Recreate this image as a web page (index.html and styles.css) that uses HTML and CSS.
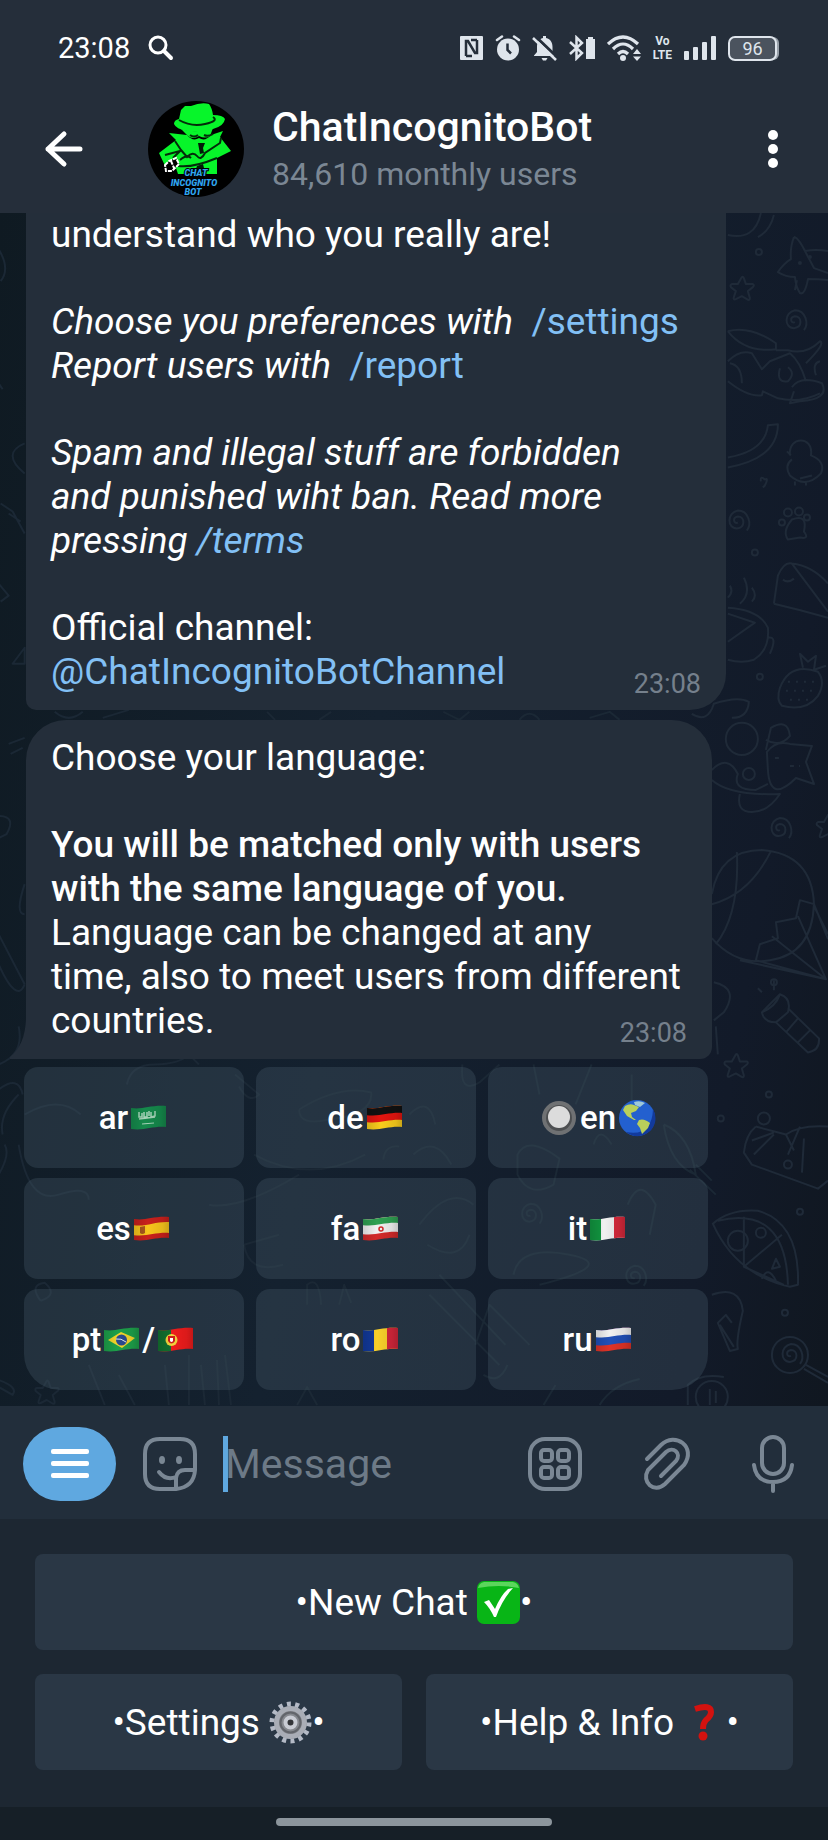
FILE: index.html
```html
<!DOCTYPE html>
<html lang="en">

<head>
    <meta charset="UTF-8">
    <meta name="viewport" content="width=device-width, initial-scale=1.0">
    <title>ChatIncognitoBot</title>
    <link rel="stylesheet" href="styles.css">
</head>

<body>
    <!-- status bar -->
    <div class="status">
        <span class="clock">23:08</span>
        <svg width="26" height="26" viewBox="0 0 26 26" fill="none" stroke="#fff" stroke-linecap="round">
            <circle cx="10" cy="10" r="8" stroke-width="3" />
            <path d="M16 16L23 23" stroke-width="4" />
        </svg>
        <div class="status-icons">
            <svg width="25" height="26" viewBox="0 0 25 26">
                <rect x="1" y="1" width="23" height="24" rx="1" fill="#dfe5ec" />
                <path fill="none" stroke="#252e3a" stroke-width="2.5" d="M7 21V6H9L16 18H18V5M12 5H18M7 21H13" />
            </svg>
            <svg width="26" height="26" viewBox="0 0 26 26">
                <circle cx="13" cy="14.5" r="11" fill="#dfe5ec" />
                <path fill="none" stroke="#dfe5ec" stroke-width="2.5" stroke-linecap="round" d="M2 5L7 1.5M24 5L19 1.5" />
                <path fill="none" stroke="#252e3a" stroke-width="2.5" d="M12.5 8.5V15L16 18.5" />
            </svg>
            <svg width="25" height="26" viewBox="0 0 25 26">
                <path fill="#dfe5ec" d="M11 3V1H14V3C19 4 20.5 8 20.5 12V17L23 20.5V21H2V20.5L5 17V12C5 8 6.5 4 11 3ZM9.5 23H15.5L14 25.5H11Z" />
                <path stroke="#252e3a" stroke-width="3" d="M3 1L25 22" />
                <path stroke="#dfe5ec" stroke-width="2.5" d="M1 3L24 25" />
            </svg>
            <svg width="28" height="26" viewBox="0 0 28 26">
                <path fill="none" stroke="#dfe5ec" stroke-width="2.5" d="M2 7L14 18L8.5 23.5V2.5L14 8L2 19" />
                <path fill="#dfe5ec" d="M18 4H20V2H25V4H27V24H18Z" />
            </svg>
            <svg width="35" height="26" viewBox="0 0 35 26">
                <g fill="none" stroke="#dfe5ec" stroke-width="3.2">
                    <path d="M1 9Q16 -5 31 9" />
                    <path d="M6 14Q16 4 26 14" />
                    <path d="M11 19Q16 14 21 19" />
                </g>
                <circle cx="16" cy="23" r="3" fill="#dfe5ec" />
                <path fill="#dfe5ec" d="M26 19L30 14L34 19ZM26 21.5H34L30 26Z" />
            </svg>
            <div class="volte"><span>Vo</span><span>LTE</span></div>
            <svg width="34" height="26" viewBox="0 0 34 26" fill="#dfe5ec">
                <rect x="1" y="16" width="5" height="9" rx="1" />
                <rect x="10" y="12" width="5" height="13" rx="1" />
                <rect x="19" y="7" width="5" height="18" rx="1" />
                <rect x="28" y="1" width="5" height="24" rx="1" />
            </svg>
            <div class="battery">96</div>
        </div>
    </div>

    <!-- chat header -->
    <header class="header">
        <button class="icon-btn back" aria-label="Back">
            <svg width="40" height="38" viewBox="0 0 40 38" fill="none" stroke="#fff" stroke-width="5" stroke-linecap="round" stroke-linejoin="round">
                <path d="M20 4L4 19L20 34M4 19H36" />
            </svg>
        </button>
        <svg class="avatar" width="98" height="98" viewBox="0 0 98 98">
            <circle cx="49" cy="49" r="48" fill="#000" />
            <g fill="#07f52a">
                <path d="M32 19L34 10L38 6L44 6Q54 2 62 4Q65 8 66 15Q76 15 78 19Q77 26 66 29Q54 33 40 31Q29 29 27 24Q27 20 32 19Z" />
                <path d="M34 29Q50 34 66 28L63 36Q58 39 52 36Q46 40 41 36Z" />
                <path d="M22 33L40 35Q46 42 52 38Q58 42 64 35L76 31L73 37L84 51L70 58V74H31L29 68L20 70L12 53L29 40Z" />
            </g>
            <g fill="none" stroke="#032b0a" stroke-width="2">
                <path d="M32 20Q44 27 58 24T66 17M43 35Q47 38 51 35M57 35Q61 37 66 34" />
                <path d="M28 41L34 50L26 58M18 55L33 51M34 50L40 57Q46 51 50 56T58 53L73 43L74 38M31 66Q46 68 70 58M33 60Q40 54 44 58" />
            </g>
            <path fill="#021a08" d="M51 43H58L56 48L57 53L53 54ZM50 66L56 64L58 72H48Z" />
            <path fill="#000" stroke="#fff" stroke-width="2" stroke-dasharray="4 1" d="M18 65L22 61L29 58L32 64L25 71L19 71ZM24 61L27 68" />
            <g class="avatar-text">
                <text x="49" y="76">CHAT</text>
                <text x="47" y="86">INCOGNITO</text>
                <text x="46" y="95">BOT</text>
            </g>
        </svg>
        <div class="title">
            <h1>ChatIncognitoBot</h1>
            <p>84,610 monthly users</p>
        </div>
        <button class="icon-btn" aria-label="More">
            <svg width="12" height="40" viewBox="0 0 12 40" fill="#fff">
                <circle cx="6" cy="6" r="5" />
                <circle cx="6" cy="20" r="5" />
                <circle cx="6" cy="34" r="5" />
            </svg>
        </button>
    </header>

    <main class="chat">
        <!-- wallpaper doodles -->
        <svg class="wallpaper" viewBox="0 0 828 1191" preserveAspectRatio="xMaxYMax slice" aria-hidden="true">
            <defs>
                <path id="star" d="M0 -12Q1 -13 2 -11L4 -5L11 -5Q13 -4 11 -2L6 2L8 9Q8 12 5 10L0 7L-6 10Q-9 11 -8 8L-6 2L-11 -2Q-12 -4 -10 -5L-4 -5Z" />
                <path id="swirl" d="M1 1C-3 3 -5 -4 1 -5C8 -5 9 6 0 7C-10 7 -10 -9 1 -11C12 -11 15 3 10 9" />
                <circle id="dot" r="3" />
            </defs>
            <!-- right side -->
            <path d="M728 22Q755 28 761 0M774 2Q770 18 758 24" />
            <path d="M794 24Q798 24 805 38Q816 36 828 38M794 24Q790 34 791 46Q784 50 778 59Q786 64 795 64Q796 74 800 80Q805 82 808 66Q818 66 828 67M805 38L814 55L828 60M797 67L795 77" />
            <circle cx="800" cy="50" r="1" />
            <circle cx="810" cy="44" r="1" />
            <use href="#star" x="742" y="76" />
            <use href="#dot" x="759" y="39" />
            <use href="#swirl" x="794" y="108" />
            <path d="M728 118Q750 112 776 130V136Q745 140 728 118M728 148Q740 136 752 140L762 156L770 148L790 140Q800 148 806 168M728 168Q748 184 762 182L763 178L778 185Q800 190 820 180M776 137H788Q806 142 820 128Q826 130 806 150M780 155Q776 170 788 168Q796 160 788 154M792 174Q800 162 822 170Q830 186 800 188L790 190L794 178M816 162Q812 150 820 148M730 150Q742 152 742 170" />
            <path d="M728 244Q765 238 768 212L778 211Q778 245 728 254" />
            <path d="M790 242C788 222 814 222 811 242Q826 248 821 260Q806 276 790 262Q784 252 792 246M787 238L791 242M800 265L812 262M795 268V272M806 268V272" />
            <path d="M761 268Q760 262 765 266Q769 264 765 272L763 274" />
            <use href="#swirl" x="737" y="308" />
            <use href="#dot" x="755" y="339" />
            <path d="M788 326Q782 318 792 306Q808 300 804 318Q810 326 800 324Z" />
            <circle cx="782" cy="309" r="3" />
            <circle cx="788" cy="299" r="4" />
            <circle cx="799" cy="298" r="4" />
            <circle cx="807" cy="304" r="3" />
            <path d="M774 390L778 362Q784 348 792 350Q812 352 828 370M774 390Q800 396 828 404M792 350L828 398M783 366Q788 370 794 365" />
            <path d="M728 394Q760 396 768 414Q770 436 754 446Q742 450 728 446M728 400L755 409L728 428M768 424Q778 422 770 440M740 390Q752 380 744 364M752 388Q758 382 752 374M728 384Q734 378 730 372" />
            <path d="M780 474Q790 448 818 458Q826 468 818 482Q806 498 782 492Q776 486 780 474M803 454L800 440L808 448L816 442L814 456L826 452" />
            <path stroke-dasharray="2 6" d="M788 468H818M786 477H818M790 486H812" />
            <use href="#dot" x="760" y="463" />
            <path d="M692 500Q708 510 714 490Q738 482 749 488Q748 504 732 504M767 538Q776 526 790 530L812 532L806 548L814 570L796 564Q770 590 768 556ZM766 536L771 514Q788 504 790 522Q780 534 766 526M712 566Q730 582 780 580Q768 598 752 598Q736 598 740 580M712 556Q728 540 738 560Q732 576 756 576L768 570" />
            <circle cx="742" cy="525" r="16" />
            <circle cx="749" cy="560" r="6" />
            <path stroke-dasharray="4 5" d="M775 544H784M790 552H800" />
            <use href="#swirl" x="779" y="615" />
            <use href="#star" x="828" y="613" />
            <path d="M712 680Q720 636 762 636Q812 640 814 690Q812 740 770 746Q736 752 712 724M737 638Q740 700 716 730M771 637Q750 680 712 690M814 690L828 725M814 690L800 686L796 704L776 708L778 724L760 730L756 746L826 765L772 722M798 702L826 765M814 692L828 720M740 746L826 765" />
            <path d="M714 768Q740 774 724 798L714 806M716 812L718 840" />
            <path d="M762 798L780 780Q792 784 788 798L776 808Q764 808 762 798ZM776 808L808 838Q820 836 819 824L788 794M786 818L798 804M798 828L810 816M762 798Q776 792 780 780M774 776V766M762 778L758 774" />
            <use href="#star" x="736" y="852" />
            <use href="#dot" x="774" y="768" />
            <path d="M756 912L786 920Q800 910 828 912M756 912Q746 920 744 938L752 950L818 974L828 966M786 920L794 936M800 912L788 940M752 926L774 918M754 940L774 920M804 924L802 958" />
            <circle cx="764" cy="904" r="6" />
            <circle cx="788" cy="950" r="4" />
            <use href="#dot" x="721" y="904" />
            <use href="#dot" x="769" y="880" />
            <use href="#dot" x="800" y="997" />
            <path d="M713 1009Q730 994 758 996Q800 1008 798 1070L790 1072Q736 1060 713 1009ZM718 1006Q786 990 788 1070M744 1002V1052L782 1020M744 1052L784 1070" />
            <circle cx="738" cy="1026" r="10" />
            <circle cx="761" cy="1018" r="5" />
            <path d="M762 1064Q768 1050 776 1066M772 1054L776 1044L780 1052Z" />
            <path d="M712 1080Q740 1070 743 1096Q736 1126 738 1134L730 1136L718 1108L726 1100L732 1108M720 1110L734 1132" />
            <use href="#dot" x="785" y="1098" />
            <circle cx="790" cy="1140" r="18" />
            <use href="#swirl" x="790" y="1140" />
            <path d="M804 1154L828 1168M806 1150L828 1162" />
            <circle cx="712" cy="1182" r="16" />
            <path d="M710 1174V1190M716 1176V1188M688 1190V1170Q700 1158 724 1162" />
            <!-- behind the language keys -->
            <g class="faint">
                <path d="M26 900Q60 880 82 900M20 930Q30 990 60 980T90 985M20 880Q0 900 4 920M0 875Q20 860 24 880M0 960Q12 940 6 930M128 870Q132 850 156 850T190 840L200 850M236 860L260 880Q250 890 240 872M255 940Q310 970 366 940M300 895Q340 870 372 878Q374 900 330 905Q300 912 300 895M384 945Q386 930 400 932M245 1030L280 1020M245 1030Q250 1060 284 1050M210 990Q240 996 300 960M42 1086Q30 1070 46 1068Q60 1080 42 1086M170 1190L166 1150M190 1140V1190M206 1190L202 1150M220 1190L218 1145M232 1190L226 1140M90 1150L106 1190M120 1160L136 1190M298 1190L308 1172L318 1190M308 1090V1070Q320 1060 322 1090M340 1090L345 1070L352 1088M0 1165Q20 1172 14 1180L0 1172" />
                <path d="M463 850Q460 880 480 868L500 850M534 850L540 880M576 890L592 850M632 860V890M518 940Q528 920 560 944L554 970Q530 984 518 960ZM664 910Q690 920 696 960Q670 950 664 910M690 955L716 980M696 950L712 966M594 930Q600 910 612 930M628 990Q640 960 656 990L650 1020M514 1060Q520 1030 570 1040T540 1070M430 1080L500 1150M440 1060L506 1130M476 1130L490 1090L530 1130M484 1160Q500 1170 508 1150M544 1190L556 1170M600 1190Q612 1170 640 1164M410 900Q430 880 436 910M414 940Q436 920 452 950M420 1010Q450 970 474 990M428 1030Q460 1050 470 1020" />
                <use href="#star" x="48" y="1178" />
                <use href="#swirl" x="530" y="1000" />
                <use href="#swirl" x="634" y="1062" />
            </g>
            <!-- left edge -->
            <g class="faint">
                <path d="M0 36Q12 56 2 68M0 170L4 176M26 230Q2 240 26 260M2 290L14 298L26 320M10 300L22 308M0 370L10 382L2 388M14 450L26 434V450ZM10 530L26 524M12 540L24 534M0 602Q18 602 8 620L0 624M26 670Q16 700 26 700M0 720L26 770M0 750Q18 790 26 770M20 812Q26 840 0 850" />
                <path d="M56 498Q70 510 84 498M104 504L130 496M268 498L276 506M320 506L332 498M444 498L460 506L470 498M520 506Q530 494 540 506M590 504L610 498L620 506" />
            </g>
        </svg>

        <div class="messages">
            <article class="bubble bubble-first">
                <div class="text">
                    <p>understand who you really are!</p>
                    <p><i>Choose you preferences with&nbsp;</i> <a href="#">/settings</a><br>
                        <i>Report users with&nbsp;</i> <a href="#">/report</a></p>
                    <p><i>Spam and illegal stuff are forbidden<br>and punished wiht ban. Read more<br>pressing <a href="#">/terms</a></i></p>
                    <p>Official channel:<br><a href="#">@ChatIncognitoBotChannel</a></p>
                </div>
                <time>23:08</time>
            </article>

            <article class="bubble bubble-last">
                <div class="text">
                    <p>Choose your language:</p>
                    <p><b>You will be matched only with users<br>with the same language of you.</b><br>Language can be changed at any<br>time, also to meet users from different<br>countries.</p>
                </div>
                <time>23:08</time>
            </article>

            <div class="keys">
                <button>ar<svg class="flag" viewBox="0 0 37 25" role="img" aria-label="Saudi Arabia">
                        <defs>
                            <clipPath id="wave">
                                <path d="M1 3C12 5 20 0 36 1V22C22 21 14 26 1 24Z" />
                            </clipPath>
                            <linearGradient id="fold">
                                <stop offset="0" stop-opacity=".15" />
                                <stop offset=".4" stop-opacity="0" />
                                <stop offset=".8" stop-opacity=".08" />
                                <stop offset="1" stop-opacity=".2" />
                            </linearGradient>
                        </defs>
                        <g clip-path="url(#wave)">
                            <path fill="#158a4c" d="M0 0H37V25H0Z" />
                            <path fill="none" stroke="#a5d3b8" stroke-width="1.5" d="M9 7V12L12 12V8M14 7V12H17V7M19 6V11M21 7V12L25 11V6M9 14L25 12" />
                            <path stroke="#a5d3b8" d="M12 19L24 18" />
                            <path fill="url(#fold)" d="M0 0H37V25H0Z" />
                        </g>
                    </svg></button>
                <button>de<svg class="flag" viewBox="0 0 37 25" role="img" aria-label="Germany">
                        <g clip-path="url(#wave)">
                            <path fill="#f8cc1c" d="M0 0H37V25H0Z" />
                            <path fill="#e3150f" d="M0 0H37V15C22 14 14 19 0 17Z" />
                            <path fill="#111" d="M0 0H37V8C22 7 14 12 0 10Z" />
                            <path fill="url(#fold)" d="M0 0H37V25H0Z" />
                        </g>
                    </svg></button>
                <button><svg class="round" viewBox="0 0 38 38" role="img" aria-label="Selected">
                        <circle cx="19" cy="19" r="17" fill="#6f7173" />
                        <circle cx="19" cy="19" r="13" fill="#4d4f51" />
                        <circle cx="19" cy="18" r="11" fill="#dcdcdc" />
                    </svg>en<svg class="round" viewBox="0 0 38 38" role="img" aria-label="Globe">
                        <circle cx="19" cy="19" r="18" fill="#2360cf" />
                        <path fill="#123a9c" d="M35 10A18 18 0 0 1 8 33Q34 38 35 10Z" />
                        <path fill="#b9cf5b" d="M7 7Q12 4 16 6L21 8L18 12L13 14L14 18L18 21L16 21L9 17L5 11ZM21 21Q26 19 32 24L30 29L24 35L22 29L19 25Z" />
                        <path fill="#9fc8d8" d="M16 3Q22 1 27 4L22 8L17 6Z" />
                    </svg></button>
                <button>es<svg class="flag" viewBox="0 0 37 25" role="img" aria-label="Spain">
                        <g clip-path="url(#wave)">
                            <path fill="#c8201c" d="M0 0H37V25H0Z" />
                            <path fill="#f8c51c" d="M0 9C14 11 22 5 37 6V17C22 16 14 21 0 19Z" />
                            <path fill="#a8561c" d="M7 11L12 10V17Q9 19 7 17Z" />
                            <path fill="url(#fold)" d="M0 0H37V25H0Z" />
                        </g>
                    </svg></button>
                <button>fa<svg class="flag" viewBox="0 0 37 25" role="img" aria-label="Iran">
                        <g clip-path="url(#wave)">
                            <path fill="#d32a2a" d="M0 0H37V25H0Z" />
                            <path fill="#f1f1f1" d="M0 0H37V16C22 15 14 20 0 18Z" />
                            <path fill="#2fa052" d="M0 0H37V7C22 6 14 11 0 9Z" />
                            <circle cx="19" cy="13" r="2" fill="none" stroke="#d32a2a" stroke-width="1.5" />
                            <path fill="url(#fold)" d="M0 0H37V25H0Z" />
                        </g>
                    </svg></button>
                <button>it<svg class="flag" viewBox="0 0 37 25" role="img" aria-label="Italy">
                        <g clip-path="url(#wave)">
                            <path fill="#f1f1f1" d="M0 0H37V25H0Z" />
                            <path fill="#11943f" d="M0 0H12V25H0Z" />
                            <path fill="#d8293b" d="M25 0H37V25H25Z" />
                            <path fill="url(#fold)" d="M0 0H37V25H0Z" />
                        </g>
                    </svg></button>
                <button>pt<svg class="flag" viewBox="0 0 37 25" role="img" aria-label="Brazil">
                        <g clip-path="url(#wave)">
                            <path fill="#1da04a" d="M0 0H37V25H0Z" />
                            <path fill="#f4d52a" d="M5 13L18 5L32 11L19 21Z" />
                            <circle cx="18.5" cy="13" r="5.5" fill="#2b4a8f" />
                            <path fill="none" stroke="#dfe6f0" d="M13 12Q18 11 23 15" />
                            <path fill="url(#fold)" d="M0 0H37V25H0Z" />
                        </g>
                    </svg>/<svg class="flag" viewBox="0 0 37 25" role="img" aria-label="Portugal">
                        <g clip-path="url(#wave)">
                            <path fill="#ee1c1c" d="M0 0H37V25H0Z" />
                            <path fill="#12702f" d="M0 0H14V25H0Z" />
                            <circle cx="14.5" cy="13" r="6" fill="#f2d33c" />
                            <path fill="#d01c1c" d="M11 9H18V14Q14.5 19 11 14Z" />
                            <path fill="#fff" d="M13 11H16V14Q14.5 16 13 14Z" />
                            <path fill="url(#fold)" d="M0 0H37V25H0Z" />
                        </g>
                    </svg></button>
                <button>ro<svg class="flag" viewBox="0 0 37 25" role="img" aria-label="Romania">
                        <g clip-path="url(#wave)">
                            <path fill="#f8d02a" d="M0 0H37V25H0Z" />
                            <path fill="#11399a" d="M0 0H12V25H0Z" />
                            <path fill="#d3263a" d="M25 0H37V25H25Z" />
                            <path fill="url(#fold)" d="M0 0H37V25H0Z" />
                        </g>
                    </svg></button>
                <button>ru<svg class="flag" viewBox="0 0 37 25" role="img" aria-label="Russia">
                        <g clip-path="url(#wave)">
                            <path fill="#df3327" d="M0 0H37V25H0Z" />
                            <path fill="#2150b8" d="M0 0H37V16C22 15 14 20 0 18Z" />
                            <path fill="#f1f1f1" d="M0 0H37V8C22 7 14 12 0 10Z" />
                            <path fill="url(#fold)" d="M0 0H37V25H0Z" />
                        </g>
                    </svg></button>
            </div>
        </div>
    </main>

    <!-- message field -->
    <form class="compose">
        <button type="button" class="menu" aria-label="Menu"><span></span><span></span><span></span></button>
        <button type="button" class="icon-btn sticker" aria-label="Stickers">
            <svg width="56" height="56" viewBox="0 0 56 56" fill="none" stroke="#7a8794" stroke-width="4" stroke-linecap="round" stroke-linejoin="round">
                <path d="M34 53H18Q3 53 3 38V18Q3 3 18 3H38Q53 3 53 18V34Q52 51 34 53Z" />
                <path d="M34 52V42Q35 34 43 34H52M17 36Q24 45 34 41" />
                <ellipse cx="20" cy="24" rx="2" ry="3" fill="#7a8794" stroke-width="2" />
                <ellipse cx="37" cy="24" rx="2" ry="3" fill="#7a8794" stroke-width="2" />
            </svg>
        </button>
        <span class="caret"></span>
        <input type="text" class="field" placeholder="Message" aria-label="Message">
        <button type="button" class="icon-btn" aria-label="Bot keyboard">
            <svg width="56" height="56" viewBox="0 0 56 56" fill="none" stroke="#7a8794" stroke-width="4">
                <rect x="3" y="3" width="50" height="50" rx="15" />
                <rect x="14" y="14" width="11" height="11" rx="3" />
                <rect x="31" y="14" width="11" height="11" rx="3" />
                <rect x="14" y="31" width="11" height="11" rx="3" />
                <rect x="31" y="31" width="11" height="11" rx="3" />
            </svg>
        </button>
        <button type="button" class="icon-btn" aria-label="Attach">
            <svg width="48" height="56" viewBox="0 0 48 56" fill="none" stroke="#7a8794" stroke-width="4" stroke-linecap="round">
                <path d="M4 23L18 9C32 -5 54 11 41 29L22 48C11 58 -2 46 5 34L23 16C30 10 39 17 33 25L18 40" />
            </svg>
        </button>
        <button type="button" class="icon-btn" aria-label="Voice message">
            <svg width="44" height="60" viewBox="0 0 44 60" fill="none" stroke="#7a8794" stroke-width="4" stroke-linecap="round">
                <rect x="11" y="3" width="22" height="37" rx="11" />
                <path d="M3 31Q5 48 22 48Q39 48 41 31M22 48V57" />
            </svg>
        </button>
    </form>

    <!-- bot keyboard -->
    <section class="keyboard">
        <button class="wide">•New Chat <svg class="emoji" viewBox="0 0 43 43" role="img" aria-label="Check mark">
                <rect width="43" height="43" rx="7" fill="#08b516" />
                <path fill="#5bd65c" d="M7 1H36Q41 2 42 7Q22 3 1 7Q2 2 7 1Z" />
                <path fill="#fff" d="M7 21L12 19L18 28Q24 14 31 8L36 7Q25 19 19 36H17Q13 27 7 21Z" />
            </svg>•</button>
        <button>•Settings <svg class="emoji" viewBox="0 0 43 43" role="img" aria-label="Gear">
                <circle cx="21.5" cy="21.5" r="18.5" fill="none" stroke="#b4bac6" stroke-width="5" stroke-dasharray="4 4.300" />
                <circle cx="21.5" cy="21.5" r="14" fill="#85888e" stroke="#a9adb6" stroke-width="5" />
                <circle cx="21.5" cy="21.5" r="10" fill="none" stroke="#62656b" stroke-width="2" />
                <circle cx="21.5" cy="21.5" r="5" fill="#333539" stroke="#c9ccd4" stroke-width="4" />
            </svg>•</button>
        <button>•Help &amp; Info <svg class="emoji" viewBox="0 0 43 43" role="img" aria-label="Question mark">
                <path fill="none" stroke="#d3120f" stroke-width="6" d="M12 8Q28 3 28 11Q28 15 23 19Q20 22 20 28" />
                <circle cx="20" cy="35" r="4.500" fill="#d3120f" />
            </svg>•</button>
    </section>

    <div class="nav"><span></span></div>
</body>

</html>
```

FILE: styles.css
```css
* {
    margin: 0;
    padding: 0;
    box-sizing: border-box;
}

body {
    min-height: 100vh;
    display: flex;
    flex-direction: column;
    background: #252e3a;
    color: #fff;
    font-family: Roboto, "Liberation Sans", sans-serif;
}

button {
    border: none;
    background: none;
    color: inherit;
    font-family: inherit;
    cursor: pointer;
}

svg {
    flex-shrink: 0;
}

a {
    color: #82c0f5;
    text-decoration: none;
}

/* status bar */
.status {
    height: 96px;
    padding: 0 48px 0 58px;
    display: flex;
    align-items: center;
    gap: 18px;
}

.clock {
    font-size: 29px;
}

.status-icons {
    margin-left: auto;
    display: flex;
    align-items: center;
    gap: 11px;
}

.volte {
    display: flex;
    flex-direction: column;
    align-items: center;
    color: #dfe5ec;
    font-size: 12px;
    font-weight: 700;
    line-height: 14px;
}

.battery {
    width: 49px;
    height: 25px;
    margin-right: 3px;
    border: 2px solid #dfe5ec;
    border-radius: 7px;
    background: #4b535e;
    box-shadow: 3px 0 0 -1px #98a0a9;
    color: #dfe5ec;
    font-size: 18px;
    line-height: 21px;
    text-align: center;
}

/* header */
.header {
    padding: 4px 49px 15px 44px;
    display: flex;
    align-items: center;
}

.icon-btn {
    display: flex;
}

.avatar {
    margin-left: 63px;
}

.avatar-text {
    fill: #2fa4ee;
    stroke: #000;
    stroke-width: 2px;
    paint-order: stroke;
    font-size: 9px;
    font-weight: 900;
    font-style: italic;
    text-anchor: middle;
}

.title {
    flex: 1;
    margin-left: 27px;
    padding-top: 2px;
}

.title h1 {
    font-size: 41px;
    font-weight: 500;
    line-height: 48px;
}

.title p {
    color: #7b8794;
    font-size: 32px;
    line-height: 46px;
}

/* chat */
.chat {
    flex: 1;
    position: relative;
    overflow: hidden;
    display: flex;
    flex-direction: column;
    justify-content: flex-end;
    background: linear-gradient(100deg, #0f1a22 0%, #14212f 45%, #121a29 85%, #101720 100%);
}

.wallpaper {
    position: absolute;
    inset: 0;
    width: 100%;
    height: 100%;
    fill: none;
    stroke: #1f2a38;
    stroke-width: 2;
    stroke-linejoin: round;
}

.faint {
    stroke: #1b2835;
}

.messages {
    position: relative;
    padding: 0 24px 16px;
}

.bubble {
    display: grid;
    margin: 0 2px 10px;
    max-width: 100%;
    background: #242e3a;
    font-size: 37px;
    line-height: 44px;
}

.bubble-first {
    width: 700px;
    border-radius: 0 0 36px 10px;
}

.bubble-last {
    position: relative;
    width: 686px;
    margin-bottom: 8px;
    padding-top: 16px;
    border-radius: 40px 40px 12px 0;
}

/* tail */
.bubble-last::before {
    content: '';
    position: absolute;
    left: -16px;
    bottom: 0;
    width: 17px;
    height: 40px;
    background: #242e3a;
    clip-path: path('M17 0H16Q15 26 0 38V40H17Z');
}

.text,
.bubble time {
    grid-area: 1 / 1;
}

.text {
    padding: 0 25px 16px;
}

.text p + p {
    margin-top: 43px;
}

.text b {
    font-weight: 500;
}

.bubble time {
    align-self: end;
    justify-self: end;
    padding: 0 25px 10px;
    color: #75808c;
    font-size: 27px;
    line-height: 32px;
}

.keys {
    width: 684px;
    max-width: 100%;
    display: grid;
    grid-template-columns: repeat(3, 1fr);
    gap: 10px 12px;
}

.keys button {
    height: 101px;
    display: flex;
    align-items: center;
    justify-content: center;
    border-radius: 14px;
    background: rgba(70, 88, 104, 0.35);
    font-size: 33px;
    font-weight: 500;
}

.keys button:nth-child(7) {
    border-bottom-left-radius: 36px;
}

.keys button:nth-child(9) {
    border-bottom-right-radius: 36px;
}

.flag {
    width: 37px;
    height: 25px;
    margin: 0 2px;
}

.round {
    width: 38px;
    height: 38px;
    margin: 0 2px;
}

/* message field */
.compose {
    height: 113px;
    padding: 2px 33px 0 23px;
    display: flex;
    align-items: center;
    gap: 60px;
    background: #222e3b;
}

.menu {
    width: 93px;
    height: 74px;
    border-radius: 37px;
    background: #5fa8e0;
    display: flex;
    flex-direction: column;
    align-items: center;
    justify-content: center;
    gap: 7px;
}

.menu span {
    width: 38px;
    height: 5px;
    border-radius: 2px;
    background: #fff;
}

.sticker {
    margin-left: -34px;
}

.caret {
    width: 5px;
    height: 56px;
    margin-left: -35px;
    background: #5fa8e0;
}

.field {
    flex: 1;
    min-width: 0;
    margin-left: -63px;
    border: none;
    outline: none;
    background: none;
    color: #fff;
    font-family: inherit;
    font-size: 41px;
}

.field::placeholder {
    color: #6d7a87;
    opacity: 1;
}

/* bot keyboard */
.keyboard {
    padding: 35px 35px 37px;
    display: grid;
    grid-template-columns: 1fr 1fr;
    gap: 24px;
    background: #1d2732;
}

.keyboard button {
    height: 96px;
    display: flex;
    align-items: center;
    justify-content: center;
    border-radius: 8px;
    background: #2a3745;
    font-size: 37px;
    white-space: pre;
}

.keyboard .wide {
    grid-column: 1 / 3;
}

.emoji {
    width: 43px;
    height: 43px;
}

.nav {
    height: 35px;
    padding-top: 11px;
    background: #161f27;
}

.nav span {
    display: block;
    width: 33.3%;
    height: 8px;
    margin: 0 auto;
    border-radius: 4px;
    background: #8c959c;
}
```
